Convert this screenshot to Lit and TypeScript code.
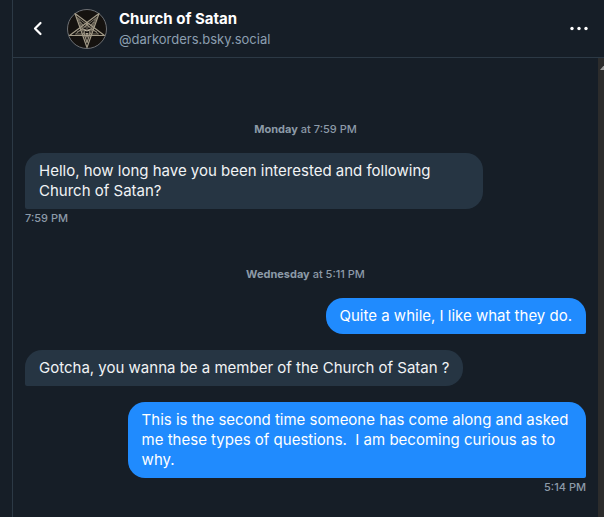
import { LitElement, html, css } from "lit";
import { customElement, property } from "lit/decorators.js";

@customElement("chat-avatar")
class ChatAvatar extends LitElement {
  static styles = css`
    :host { display: block; width: 40px; height: 40px; flex: none; }
    svg { display: block; width: 100%; height: 100%; }
  `;
  render() {
    return html`
      <svg viewBox="0 0 40 40" fill="none" role="img" aria-label="Church of Satan avatar">
        <circle cx="20" cy="20" r="19.5" fill="#15120f" stroke="#6d7074" stroke-width="1" />
        <g stroke="#a39b88" stroke-linejoin="round">
          <path stroke-width="1.2" d="M20 38.5 8 4.5 37.500 26.500H2.500L32 4.500Z" />
          <path stroke-width=".7" d="M20 33 10.500 8.500 31.500 25H8.500L29.500 8.500Z" />
          <path stroke-width=".8" d="M13.500 13 18 18.500 20 14l2 4.500 4.500-5.500M10 23l6-3 4 2 4-2 6 3M17 20l1 7 2 7 2-7 1-7M18.500 28h3M20 14v8" />
          <path stroke-width=".6" d="M12 10l5 12M28 10l-5 12M16 24l4 4 4-4" />
        </g>
        <path fill="#c6bda8" d="M17.500 20l2 1v1.500l-2-1zM22.500 20l-2 1v1.500l2-1zM19 24h2l-1 3z" />
      </svg>
    `;
  }
}

@customElement("chat-message")
class ChatMessage extends LitElement {
  @property() text = "";
  @property() time = "";
  @property({ type: Boolean, reflect: true }) own = false;

  static styles = css`
    :host { display: flex; flex-direction: column; align-items: flex-start; }
    :host([own]) { align-items: flex-end; }
    .bubble {
      box-sizing: border-box;
      max-width: 80%;
      margin: 0 0 0 12px;
      padding: 8px 14px;
      border-radius: 17px 17px 17px 2px;
      background: #263543;
      color: #f1f3f5;
      font-size: 15px;
      line-height: 20px;
      white-space: pre-wrap;
    }
    :host([own]) .bubble {
      margin-left: 0;
      border-radius: 17px 17px 2px 17px;
      background: #208bfe;
      color: #fff;
    }
    .time {
      margin: 1px 0 0 12px;
      font-size: 11px;
      line-height: 16px;
      font-weight: 500;
      color: #8c9aa8;
    }
  `;
  render() {
    return html`
      <p class="bubble">${this.text}</p>
      ${this.time ? html`<time class="time">${this.time}</time>` : null}
    `;
  }
}

@customElement("app-root")
class AppRoot extends LitElement {
  static styles = css`
    :host {
      display: block;
      box-sizing: border-box;
      min-height: 100vh;
      padding-left: 12px;
      background: #161e27;
      font-family: Inter, "Liberation Sans", sans-serif;
    }
    .panel {
      display: flex;
      flex-direction: column;
      min-height: 100vh;
      border-left: 1px solid #2c3945;
    }
    header {
      display: flex;
      align-items: center;
      height: 57px;
      padding: 0 12px;
      border-bottom: 1px solid #2c3945;
    }
    button {
      display: grid;
      place-items: center;
      padding: 0;
      border: 0;
      background: none;
      color: #fff;
    }
    .back { width: 26px; height: 32px; margin-right: 16px; }
    .more { width: 26px; height: 32px; }
    .who { flex: 1; min-width: 0; margin-left: 12px; }
    h1 {
      margin: 0;
      font-size: 15px;
      line-height: 20px;
      font-weight: 700;
      color: #fff;
    }
    .handle {
      margin: 0;
      font-size: 13px;
      line-height: 20px;
      color: #8c9eb0;
    }
    .body { display: flex; flex: 1; }
    main { flex: 1; padding: 63px 12px 16px 0; }
    .date {
      margin: 0 0 16px 12px;
      text-align: center;
      font-size: 11px;
      line-height: 16px;
      font-weight: 500;
      color: #8c9aa8;
    }
    .date b { font-weight: 700; }
    .thread { display: flex; flex-direction: column; gap: 16px; }
    .day + .day { margin-top: 40px; }
    .track {
      width: 6px;
      padding-top: 6px;
      box-sizing: border-box;
      overflow: hidden;
      background: #2c2c2c;
    }
    .track svg { display: block; margin-left: 2px; }
  `;
  render() {
    return html`
      <div class="panel">
        <header>
          <button class="back" aria-label="Back">
            <svg width="20" height="20" viewBox="0 0 20 20" fill="none">
              <path d="M12.500 4 7 9.500l5.500 5.500" stroke="currentColor" stroke-width="2.2" stroke-linecap="round" stroke-linejoin="round" />
            </svg>
          </button>
          <chat-avatar></chat-avatar>
          <div class="who">
            <h1>Church of Satan</h1>
            <p class="handle">@darkorders.bsky.social</p>
          </div>
          <button class="more" aria-label="More options">
            <svg width="20" height="20" viewBox="0 0 20 20" fill="currentColor">
              <circle cx="3" cy="9.500" r="1.700" /><circle cx="10" cy="9.500" r="1.700" /><circle cx="17" cy="9.500" r="1.700" />
            </svg>
          </button>
        </header>
        <div class="body">
          <main>
            <section class="day">
              <p class="date"><b>Monday</b> at 7:59 PM</p>
              <div class="thread">
                <chat-message
                  text="Hello, how long have you been interested and following Church of Satan?"
                  time="7:59 PM"
                ></chat-message>
              </div>
            </section>
            <section class="day">
              <p class="date"><b>Wednesday</b> at 5:11 PM</p>
              <div class="thread">
                <chat-message own text="Quite a while, I like what they do."></chat-message>
                <chat-message text="Gotcha, you wanna be a member of the Church of Satan ?"></chat-message>
                <chat-message
                  own
                  text="This is the second time someone has come along and asked me these types of questions.  I am becoming curious as to why."
                  time="5:14 PM"
                ></chat-message>
              </div>
            </section>
          </main>
          <div class="track" aria-hidden="true">
            <svg width="10" height="6" viewBox="0 0 10 6"><path d="M5 0l5 6H0z" fill="#9c9c9c" /></svg>
          </div>
        </div>
      </div>
    `;
  }
}
